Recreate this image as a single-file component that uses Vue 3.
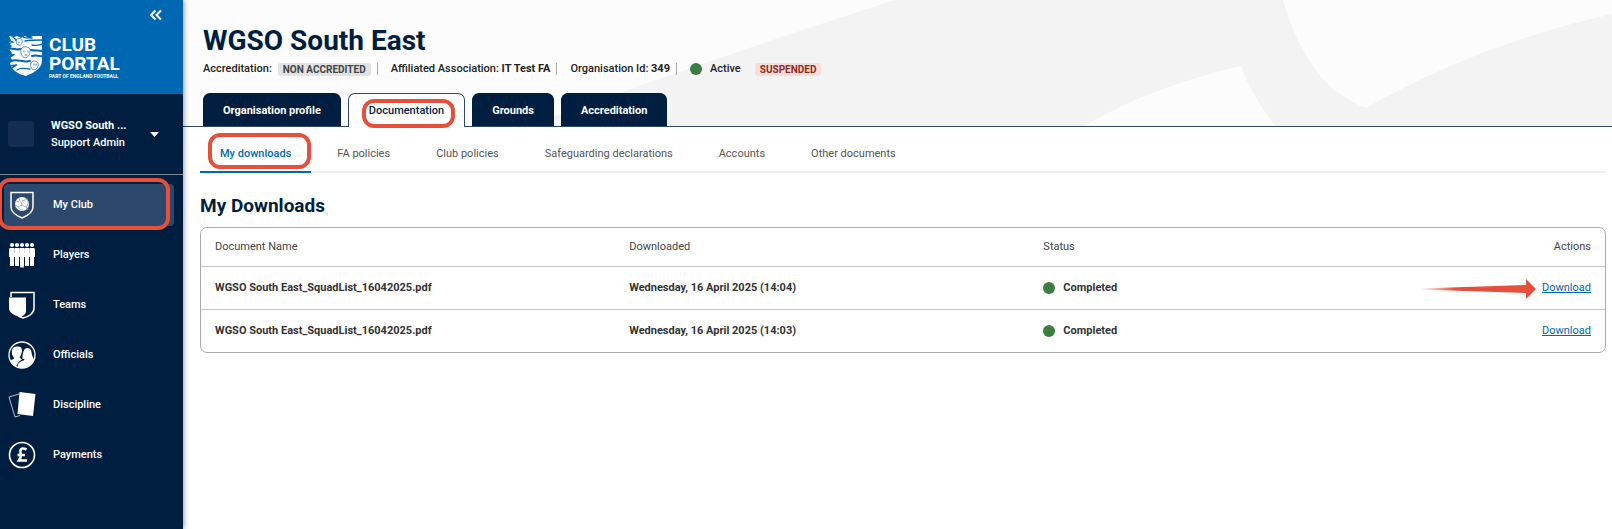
<script setup>
const navItems = ['My Club', 'Players', 'Teams', 'Officials', 'Discipline', 'Payments']
const tabs = ['Organisation profile', 'Documentation', 'Grounds', 'Accreditation']
const subTabs = ['My downloads', 'FA policies', 'Club policies', 'Safeguarding declarations', 'Accounts', 'Other documents']
const rows = [
  { name: 'WGSO South East_SquadList_16042025.pdf', date: 'Wednesday, 16 April 2025 (14:04)', marked: true },
  { name: 'WGSO South East_SquadList_16042025.pdf', date: 'Wednesday, 16 April 2025 (14:03)', marked: false },
]
const people = [4, 9, 14, 19, 24]
</script>

<template>
  <div class="app">
    <aside class="sidebar">
      <div class="brand">
        <button class="collapse" aria-label="Collapse menu">
          <svg width="14" height="12" viewBox="0 0 14 12"><path d="M6.5 1.5 2 6l4.500 4.500M12 1.500 7.500 6l4.500 4.500" fill="none" stroke="#fff" stroke-width="2" /></svg>
        </button>
        <a href="#" class="logo">
          <svg width="35" height="42" viewBox="0 0 35 42">
            <path d="M1 1l5 1 3-1 4 2 4-2 4 2 4-2 9 0v25c0 7-8 12-16.500 15C9 39 3 34 2 28l3-2-4-5 3-3-3-4 3-3-3-3 2-3z" fill="#fff" />
            <g fill="none" stroke="#0068b3" stroke-width="1.300" stroke-linecap="round">
              <path d="M0 5l5 2-5 2M5 2l3 3M15 2c3 2 5 0 9 1M17 6c5-1 9-1 17-1M24 10c4 1 7 0 11-1" />
              <path d="M0 14c5-2 8 2 12 0M23 15c4 1 7 0 12 1M0 19l5 1-5 3" stroke-width="2" />
              <path d="M24 21c4-2 6 1 11 0M3 26c6-3 12 2 19 0" stroke-width="2" />
              <path d="M1 31l8-1-5 3M9 35c4-3 9-1 13-1" />
              <path d="M8 5c1-2 5-2 6 0 1 3-1 6-3 5-2 0-3-2-3-5zM13 14c1-3 7-3 9 0 1 4-2 9-5 9-3-1-5-5-4-9zM23 28c1-3 6-2 7 0 1 4-2 7-4 7-3-1-4-4-3-7z" stroke-width=".7" />
              <path d="M16 16v1M20 16v1M17 20h2M26 29v1M28 29v1M11 7v1" stroke-width=".8" />
            </g>
          </svg>
          <span class="wordmark">
            <span class="word">CLUB</span>
            <span class="word">PORTAL</span>
            <span class="tagline">PART OF ENGLAND FOOTBALL</span>
          </span>
        </a>
      </div>
      <button class="account">
        <span class="avatar"></span>
        <span class="who"><b>WGSO South ...</b><span>Support Admin</span></span>
        <svg width="10" height="5" viewBox="0 0 10 5"><path d="M0 0h9L4.500 5z" fill="#fff" /></svg>
      </button>
      <nav class="nav">
        <a v-for="(item, i) in navItems" :key="item" href="#" :class="['nav-item', { current: i === 0 }]">
          <svg v-if="i === 0" class="icon" viewBox="0 0 28 28">
            <path d="M3 1.500h22V16c0 5-5 8.500-11 11C8 24.500 3 21 3 16z" fill="none" stroke="#fff" stroke-width="1.500" />
            <circle cx="14" cy="13" r="7" fill="#fff" />
            <path d="M11 7c0 3 3 4 3 7l-4 2-3-2M14 14l4 2 2 3M14 10l6-2M18 16c2-2 2-4 2-6M10 16c1 2 3 3 5 3M8 10l3 1" fill="none" stroke="#8b9cb3" stroke-width=".8" />
          </svg>
          <svg v-else-if="i === 1" class="icon" viewBox="0 0 28 28">
            <g v-for="x in people" :key="x" fill="#fff">
              <circle :cx="x" cy="4" r="2.100" />
              <path :d="`M${x - 2} 7h4q1 0 1 2v7h-1v9h-4v-9h-1v-7q0-2 1-2z`" />
            </g>
            <path d="M6.500 7v5M11.500 7v5M16.500 7v5M21.500 7v5" stroke="#001e40" stroke-opacity=".45" stroke-width=".6" />
            <path d="M11.500 8h5v8h-.7v10.500h-3.600V16h-.7z" fill="#fff" />
          </svg>
          <svg v-else-if="i === 2" class="icon" viewBox="0 0 28 28">
            <path d="M3 6V1.500h23V17c0 5-5 9-11 10l-5-2" fill="none" stroke="#fff" stroke-width="1.500" />
            <path d="M1 6.500h17V20c0 3-3 5-5 6-6-1-12-4-12-9z" fill="#fff" />
          </svg>
          <svg v-else-if="i === 3" class="icon" viewBox="0 0 28 28">
            <circle cx="14" cy="14" r="13" fill="none" stroke="#fff" stroke-width="1.300" />
            <path d="M9 5.500c3-.5 5 1 5 4 0 2-.5 2.500-1 4-.5 2-1.500 2.500-1 3.500l2 1.500-3 2-3 5C5 24 3 21 2.500 19c2 0 4-1 3.500-2.500-2-2-2.500-4-2-7 0-2 2-4 5-4z" fill="#fff" />
            <path d="M19.500 7c4 0 4 4 4.500 7l2 5c-2 5-7 8-12 8l-4.500-1c.5-4 2-5 4.500-6 1-.5 2.500-.5 2.500-2h-2c0-3 0-11 5-11z" fill="#fff" />
          </svg>
          <svg v-else-if="i === 4" class="icon" viewBox="0 0 28 28">
            <path d="M11 3 1 6l6 20 5-1.500" fill="none" stroke="#fff" stroke-opacity=".7" />
            <path d="M11.500 1 27.500 3l-2.500 22-15.500-2z" fill="#fff" />
          </svg>
          <svg v-else class="icon" viewBox="0 0 28 28">
            <circle cx="14" cy="14" r="12.500" fill="none" stroke="#fff" stroke-width="1.600" />
            <path d="M18.500 8.500c-4-2-6.500-1-6 2.500.5 3 1 5-1.500 8.500H19M9.500 14H17" fill="none" stroke="#fff" stroke-width="2.600" />
          </svg>
          <span>{{ item }}</span>
          <i v-if="i === 0" class="mark mark-nav"></i>
        </a>
      </nav>
    </aside>

    <main class="main">
      <header class="header">
        <svg class="backdrop" viewBox="0 0 1429 126" preserveAspectRatio="none" aria-hidden="true">
          <path d="M712 0Q530 58 345 126H1429V0z" fill="#f3f3f3" />
          <path d="M1100 0Q1124 86 1183 108Q1295 44 1429 14V0z" fill="#fcfcfc" />
          <path d="M901 126Q967 87 1058 66Q1069 98 1093 126z" fill="#fcfcfc" />
        </svg>
        <h1>WGSO South East</h1>
        <div class="meta">
          <span>Accreditation:</span><span class="badge">NON ACCREDITED</span><span class="sep"></span>
          <span>Affiliated Association: <b>IT Test FA</b></span><span class="sep"></span>
          <span>Organisation Id: <b>349</b></span><span class="sep"></span>
          <span class="dot"></span><span class="active-label">Active</span><span class="badge danger">SUSPENDED</span>
        </div>
        <nav class="tabs">
          <a v-for="tab in tabs" :key="tab" href="#" :class="['tab', { open: tab === 'Documentation' }]">{{ tab }}<i v-if="tab === 'Documentation'" class="mark mark-tab"></i></a>
        </nav>
      </header>

      <section class="content">
        <nav class="subtabs">
          <a v-for="(tab, i) in subTabs" :key="tab" href="#" :class="['subtab', { open: i === 0 }]">{{ tab }}<i v-if="i === 0" class="mark mark-sub"></i></a>
        </nav>
        <h2>My Downloads</h2>
        <div class="panel">
          <table>
            <thead>
              <tr><th>Document Name</th><th>Downloaded</th><th>Status</th><th class="actions">Actions</th></tr>
            </thead>
            <tbody>
              <tr v-for="row in rows" :key="row.date">
                <td>{{ row.name }}</td>
                <td>{{ row.date }}</td>
                <td><span class="status"><span class="dot"></span>Completed</span></td>
                <td class="actions">
                  <a href="#" class="download">Download
                    <svg v-if="row.marked" class="arrow" width="116" height="20" viewBox="0 0 116 20" aria-hidden="true">
                      <defs><linearGradient id="fade"><stop offset="0" stop-color="#e5503c" stop-opacity="0" /><stop offset=".3" stop-color="#e5503c" /></linearGradient></defs>
                      <path d="M0 9.500 106 6v-6l10 10-10 10v-6L0 10.500z" fill="url(#fade)" />
                    </svg>
                  </a>
                </td>
              </tr>
            </tbody>
          </table>
        </div>
      </section>
    </main>
  </div>
</template>

<style>
body { margin: 0; background: #fff; }
</style>

<style scoped>
* { box-sizing: border-box; }
a { color: inherit; text-decoration: none; }
button { font: inherit; color: inherit; background: none; border: 0; padding: 0; cursor: pointer; }
.app { display: flex; min-height: 100vh; font: 500 11px/16px Roboto, "Liberation Sans", sans-serif; color: #222; }

.sidebar { flex: none; width: 183px; background: #001e40; color: #fff; box-shadow: 1px 0 5px rgba(0, 0, 0, .4); z-index: 1; overflow: hidden; }
.brand { height: 94px; background: #0068b3; display: flex; flex-direction: column; padding: 9px 20px 0 8px; }
.collapse { align-self: flex-end; height: 12px; display: flex; }
.logo { display: flex; gap: 6px; margin-top: 14px; }
.wordmark { display: flex; flex-direction: column; }
.word { font-size: 19px; line-height: 19px; font-weight: 700; }
.tagline { font-size: 5px; line-height: 6px; font-weight: 700; white-space: nowrap; }
.account { width: 100%; height: 81px; border-bottom: 1px solid #7a8798; display: flex; align-items: center; padding: 0 23px 0 8px; text-align: left; }
.avatar { width: 26px; height: 26px; border-radius: 3px; background: #122c53; }
.who { display: flex; flex-direction: column; flex: 1; margin-left: 17px; line-height: 17px; }
.nav { padding: 9px 9px 0 4px; display: flex; flex-direction: column; gap: 8px; }
.nav-item { position: relative; height: 42px; border-radius: 4px; display: flex; align-items: center; gap: 17px; padding-left: 4px; }
.nav-item.current { background: #2c486c; }
.icon { width: 28px; height: 28px; flex: none; }

.mark { position: absolute; border: 4px solid #e5503c; border-radius: 12px; pointer-events: none; }
.mark-nav { inset: -6px 4px -4px -6px; }
.mark-tab { inset: 5px 9px -1px 13px; }
.mark-sub { inset: 6px 0 2px 8px; }

.main { flex: 1; min-width: 0; }
.header { position: relative; background: #fcfcfc; border-bottom: 1px solid #2f476b; padding: 22px 0 0 20px; }
.backdrop { position: absolute; inset: 0; width: 100%; height: 100%; }
h1 { position: relative; margin: 0; font-size: 28px; line-height: 38px; color: #001e40; }
.meta { position: relative; display: flex; align-items: center; height: 18px; }
.badge { background: #e1e3e3; color: #444; font-size: 10px; line-height: 13px; font-weight: 700; border-radius: 3px; padding: 0 5px; margin-left: 6px; }
.badge.danger { background: #fadcd9; color: #8c2a1c; margin-left: 14px; }
.sep { width: 1px; height: 12px; background: #aaa; margin: 0 13px 0 6px; }
.dot { width: 12px; height: 12px; border-radius: 50%; background: #3c7d40; flex: none; }
.active-label { margin-left: 8px; }
.tabs { position: relative; display: flex; gap: 7px; margin-top: 15px; height: 33px; }
.tab { position: relative; border: 1px solid #001e40; border-bottom: 0; border-radius: 7px 7px 0 0; background: #001e40; color: #fff; padding: 0 19px; line-height: 34px; font-weight: 700; }
.tab.open { background: #fff; color: #001e40; border-color: #2f476b; height: 34px; padding: 0 20px; font-weight: 500; }

.content { padding: 0 6px 0 17px; }
.subtabs { display: flex; gap: 6px; height: 46px; border-bottom: 2px solid #f0f0f0; }
.subtab { position: relative; padding: 0 20px; line-height: 54px; height: 46px; color: #555; font-weight: 400; }
.subtab.open { color: #0068b3; border-bottom: 2px solid #0068b3; font-weight: 500; }
h2 { margin: 19px 0 7px; font-size: 19px; line-height: 28px; color: #001e40; }
.panel { border: 1px solid #aaa; border-radius: 7px; }
table { width: 100%; border-collapse: collapse; table-layout: fixed; }
th { height: 38px; width: 29.5%; padding: 0 14px; text-align: left; font-weight: 400; color: #444; }
th.actions { width: auto; }
td { height: 43px; padding: 0 14px; border-top: 1px solid #c4c4c4; color: #333; font-weight: 700; }
.actions { text-align: right; }
.status { display: flex; align-items: center; gap: 8px; }
.download { position: relative; color: #0068b3; font-weight: 400; text-decoration: underline; }
.arrow { position: absolute; right: calc(100% + 6px); top: -2px; }
</style>
